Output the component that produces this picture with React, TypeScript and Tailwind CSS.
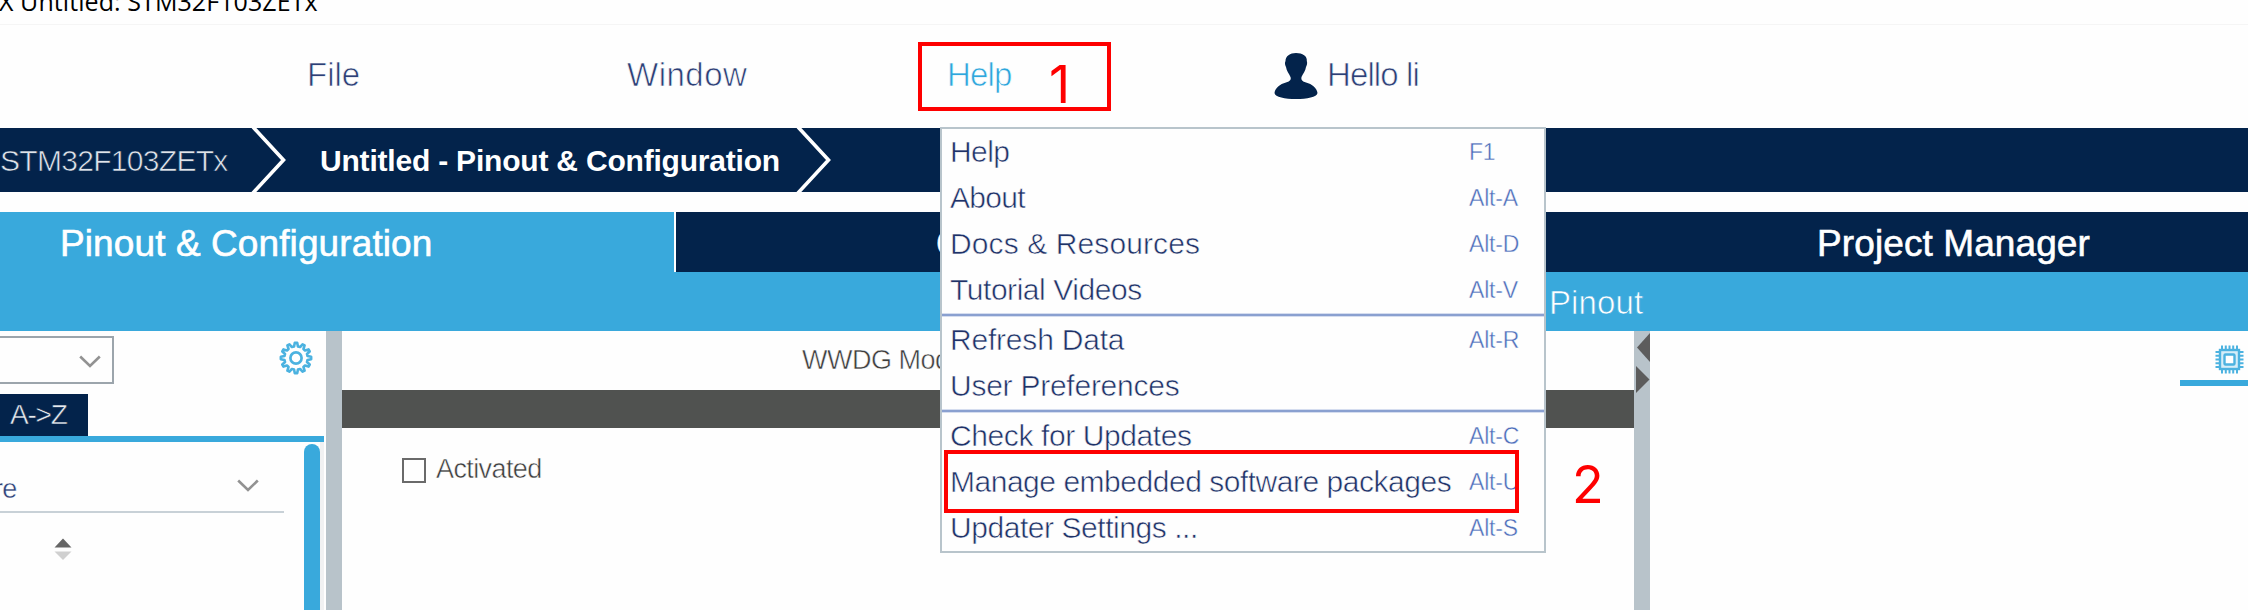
import React from "react";

type Entry = { label: string; keys?: string; tracking: string };

const groups: Entry[][] = [
  [
    { label: "Help", keys: "F1", tracking: "tracking-[-0.6px]" },
    { label: "About", keys: "Alt-A", tracking: "tracking-[-0.7px]" },
    { label: "Docs & Resources", keys: "Alt-D", tracking: "tracking-[0.1px]" },
    { label: "Tutorial Videos", keys: "Alt-V", tracking: "tracking-[-0.45px]" },
  ],
  [
    { label: "Refresh Data", keys: "Alt-R", tracking: "tracking-[-0.2px]" },
    { label: "User Preferences", tracking: "tracking-[-0.25px]" },
  ],
  [
    { label: "Check for Updates", keys: "Alt-C", tracking: "tracking-[-0.4px]" },
    { label: "Manage embedded software packages", keys: "Alt-U", tracking: "tracking-[-0.48px]" },
    { label: "Updater Settings ...", keys: "Alt-S", tracking: "tracking-[-0.45px]" },
  ],
];

function gearPath(teeth: number, inner: number, outer: number, c: number) {
  const pts: string[] = [];
  const step = (Math.PI * 2) / teeth;
  for (let i = 0; i < teeth; i++) {
    const a = i * step - Math.PI / 2;
    const at = (r: number, t: number) =>
      `${(c + r * Math.cos(a + t * step)).toFixed(2)} ${(c + r * Math.sin(a + t * step)).toFixed(2)}`;
    pts.push(at(inner, -0.32), at(outer, -0.15), at(outer, 0.15), at(inner, 0.32));
  }
  return `M${pts.join("L")}Z`;
}

function Gear() {
  return (
    <svg width="34" height="34" viewBox="0 0 34 34" fill="none" stroke="#4bb2e0" strokeWidth="2.6" strokeLinejoin="round">
      <path d={gearPath(12, 11.7, 15.2, 17)} />
      <circle cx="17" cy="17" r="5.6" strokeWidth="2.7" />
    </svg>
  );
}

function Chip() {
  const pins = [7, 10.8, 14.5, 18.2, 22];
  return (
    <svg width="29" height="29" viewBox="0 0 29 29" fill="none" stroke="#4bb2e0">
      <rect x="5" y="5" width="19" height="19" fill="#d5edf8" strokeWidth="2.4" />
      <rect x="9.5" y="9.5" width="10" height="10" rx="1" fill="#fff" strokeWidth="2.4" />
      {pins.map((p) => (
        <path key={p} strokeWidth="2" d={`M${p} 0.5V5M${p} 24V28.5M0.5 ${p}H5M24 ${p}H28.5`} />
      ))}
    </svg>
  );
}

function Down() {
  return (
    <svg width="22" height="13" viewBox="0 0 22 13" fill="none" stroke="#929292" strokeWidth="2.6">
      <path d="M1.2 1.5L11 11L20.8 1.5" />
    </svg>
  );
}

function Crumb() {
  return (
    <svg className="shrink-0" width="36" height="65" viewBox="0 0 36 65" fill="none" stroke="#fff" strokeWidth="3.6">
      <path d="M2 -1L32.5 32L1 66" />
    </svg>
  );
}

function Person() {
  return (
    <svg width="44" height="48" viewBox="0 0 44 48" fill="#03234b">
      <path d="M22 1C28.500 1 33.500 4 32.800 9C33.500 11 33 13 32 15C31.500 19 29 21.500 27.500 25C26.800 28 28.500 29.500 32 30.500C38 32 43 36 43.500 41C43 45 33 47 22 47C11 47 1 45 0.500 41C1 36 6 32 12 30.500C15.500 29.500 17.500 28 16.500 25C15 21.500 12.500 19 12 15C11 13 10.500 11 11.500 9C11.500 4 16 1 22 1Z" />
    </svg>
  );
}

export default function App() {
  return (
    <div className="relative flex h-[610px] w-[2248px] flex-col overflow-hidden whitespace-nowrap bg-[#fefefe] font-['Liberation_Sans',sans-serif]">
      <header className="flex h-[25px] shrink-0 border-b border-[#f5f5f5] font-['Open_Sans',sans-serif] text-[25px] text-black">
        <span className="-mt-[16px] -ml-px h-[34px] leading-[34px] tracking-[0.08px]">X Untitled: STM32F103ZETx</span>
      </header>

      <nav className="flex h-[103px] shrink-0 items-center pb-[3px] pl-[307px] text-[33px] text-[#2c3f76] [-webkit-text-stroke:0.7px_#fefefe]">
        <span className="w-[320px]">File</span>
        <span className="w-[320px] tracking-[0.5px]">Window</span>
        <span className="w-[327px] tracking-[-0.8px] text-[#2ea6dc]">Help</span>
        <span className="flex items-center">
          <span className="mt-0.5 mr-[9px]">
            <Person />
          </span>
          <span className="tracking-[-0.9px]">Hello li</span>
        </span>
      </nav>

      <div className="flex h-[64px] shrink-0 items-center bg-[#03234b] text-[30px]">
        <span className="w-[251px] tracking-[-0.7px] text-[#dfe4ea] [-webkit-text-stroke:0.6px_#03234b]">STM32F103ZETx</span>
        <Crumb />
        <span className="w-[509px] pl-[33px] font-bold tracking-[-0.2px] text-white">Untitled - Pinout &amp; Configuration</span>
        <Crumb />
      </div>

      <div className="mt-5 flex h-[60px] shrink-0 text-[37px] tracking-[0.1px] text-white [-webkit-text-stroke:0.6px_#fff]">
        <div className="flex w-[676px] items-center border-r-2 border-white bg-[#39a9dc] pt-[3px] pl-[60px]">Pinout &amp; Configuration</div>
        <div className="flex flex-1 items-center bg-[#03234b] pt-[3px]">
          <span className="w-[1141px] pl-[260px]">Clock Configuration</span>
          <span>Project Manager</span>
        </div>
      </div>
      <div className="flex h-[59px] shrink-0 items-center bg-[#39a9dc] pt-[2px] pl-[1549px] text-[33px] tracking-[0.1px] text-white [-webkit-text-stroke:0.7px_#39a9dc]">
        Pinout
      </div>

      <main className="flex min-h-0 flex-1">
        <aside className="flex w-[326px] flex-col">
          <div className="flex h-[63px] justify-between pt-[5px] pr-[13px]">
            <div className="flex h-[48px] w-[114px] items-center justify-end border-2 border-l-0 border-[#9ca5ac] pt-0.5 pr-[11px]">
              <Down />
            </div>
            <span className="pt-[5px]">
              <Gear />
            </span>
          </div>
          <div className="flex h-[42px] w-[88px] items-center bg-[#03234b] pl-[10px] text-[28px] tracking-[-1.2px] text-[#e6eaef] [-webkit-text-stroke:0.5px_#03234b]">
            A-&gt;Z
          </div>
          <div className="h-[6px] w-[324px] bg-[#39a9dc]" />
          <div className="flex min-h-0 flex-1">
            <div className="w-[304px]">
              <div className="flex h-[71px] w-[284px] justify-between border-b-2 border-[#c8d1d7]">
                <span className="-ml-[6px] pt-[31px] text-[27px] leading-[32px] tracking-[-0.8px] text-[#2c3f76] [-webkit-text-stroke:0.4px_#fefefe]">re</span>
                <span className="pt-[37px] pr-[25px]">
                  <Down />
                </span>
              </div>
              <svg className="mt-[25px] ml-[54px]" width="18" height="22" viewBox="0 0 18 22">
                <path d="M0.500 9.500L9 0.500L17.500 9.500Z" fill="#666" />
                <path d="M0.500 13.500L9 22L17.500 13.500Z" fill="#d0d0d0" />
              </svg>
            </div>
            <div className="w-[20px] bg-[#f0f1f2]">
              <div className="h-full w-[16px] bg-[#fefefe] pt-[2px]">
                <div className="h-full rounded-t-full bg-[#39a9dc]" />
              </div>
            </div>
          </div>
        </aside>
        <div className="w-4 bg-[#b8c3ca]" />
        <section className="flex w-[1292px] flex-col">
          <div className="flex h-[59px] items-center pl-[460px] text-[27px] tracking-[-0.5px] text-[#3c3c3c] [-webkit-text-stroke:0.5px_#fefefe]">
            WWDG Mode and Configuration
          </div>
          <div className="h-[38px] bg-[#505250]" />
          <label className="mt-[24px] flex h-[36px] items-center pl-[60px] text-[27px] tracking-[-0.6px] text-[#3c3c3c] [-webkit-text-stroke:0.5px_#fefefe]">
            <span className="mr-[10px] h-[25px] w-[24px] border-2 border-[#6a6a6a]" />
            <span className="-mt-0.5">Activated</span>
          </label>
        </section>
        <div className="w-4 bg-[#b8c3ca]">
          <svg width="16" height="64" viewBox="0 0 16 64" fill="#5c5c5c">
            <path d="M16 2V31L3 16.500Z" />
            <path d="M2 35V62L15.500 48.500Z" />
          </svg>
        </div>
        <section className="flex flex-1 justify-end">
          <div className="flex h-[55px] w-[68px] justify-end border-b-[6px] border-[#39a9dc] pt-[14px] pr-[4px]">
            <Chip />
          </div>
        </section>
      </main>

      <div className="absolute top-[127px] left-[940px] w-[606px] border-2 border-[#b8c4cb] bg-[#fefefe]">
        {groups.map((group, g) => (
          <div key={g}>
            {g > 0 && <div className="h-1 border-y border-[#d5ddef] bg-[#8aa0d0]" />}
            {group.map((e) => (
              <div key={e.label} className="flex h-[46px] items-center pb-px pl-[8px] text-[30px] text-[#1f3268] [-webkit-text-stroke:0.55px_#fefefe]">
                <span className={`w-[519px] ${e.tracking}`}>{e.label}</span>
                <span className="pt-px text-[23px] tracking-[-0.2px] text-[#4c6dba] [-webkit-text-stroke:0.4px_#fefefe]">{e.keys}</span>
              </div>
            ))}
          </div>
        ))}
      </div>

      <div className="absolute top-[42px] left-[918px] h-[69px] w-[193px] border-4 border-[#fe0000]" />
      <span className="absolute top-[54px] left-[1049px] font-['Inter',sans-serif] text-[52px] leading-[62px] text-[#fe0000]">1</span>
      <div className="absolute top-[450px] left-[944px] h-[63px] w-[575px] border-4 border-[#fe0000]" />
      <span className="absolute top-[454px] left-[1572px] font-['Inter',sans-serif] text-[52px] leading-[62px] text-[#fe0000]">2</span>
    </div>
  );
}
